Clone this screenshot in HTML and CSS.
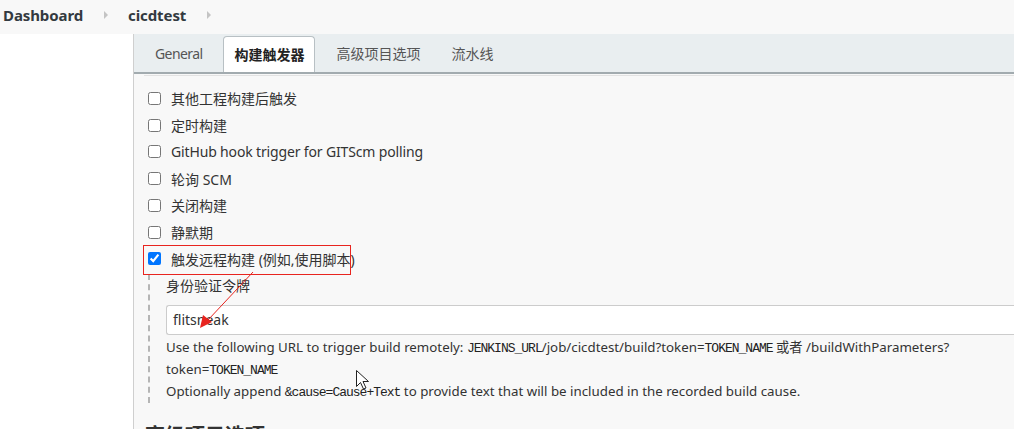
FILE: index.html
```html
<!DOCTYPE html>
<html lang="zh">
<head>
<meta charset="utf-8">
<link rel="stylesheet" href="styles.css">
</head>
<body>
<div class="crumbs">
  <a class="crumb">Dashboard</a><span class="sep"></span>
  <a class="crumb">cicdtest</a><span class="sep"></span>
</div>
<div class="main">
  <div class="side"></div>
  <div class="content">
    <div class="tabbar">
      <span class="tab latin">General</span>
      <span class="tab active">构建触发器</span>
      <span class="tab">高级项目选项</span>
      <span class="tab">流水线</span>
    </div>
    <div class="rule"></div>
    <div class="checks">
      <label class="row"><input type="checkbox"><span>其他工程构建后触发</span></label>
      <label class="row"><input type="checkbox"><span>定时构建</span></label>
      <label class="row"><input type="checkbox"><span class="latin">GitHub hook trigger for GITScm polling</span></label>
      <label class="row"><input type="checkbox"><span>轮询 SCM</span></label>
      <label class="row"><input type="checkbox"><span>关闭构建</span></label>
      <label class="row"><input type="checkbox"><span>静默期</span></label>
      <label class="row"><input type="checkbox" checked><span>触发远程构建 (例如,使用脚本)</span></label>
    </div>
    <div class="nested">
      <div class="field-label">身份验证令牌</div>
      <div class="input">flitsneak</div>
      <div class="help">
        <div>Use the following URL to trigger build remotely: <code>JENKINS_URL</code>/job/cicdtest/build?token=<code>TOKEN_NAME</code> 或者 /buildWithParameters?</div>
        <div>token=<code>TOKEN_NAME</code></div>
        <div>Optionally append <code>&amp;cause=Cause+Text</code> to provide text that will be included in the recorded build cause.</div>
      </div>
    </div>
    <h2 class="section">高级项目选项</h2>
  </div>
</div>
<svg class="annot" width="1014" height="429" viewBox="0 0 1014 429">
  <rect x="143.5" y="245.5" width="207" height="29" fill="none" stroke="#e8241f" stroke-width="1"/>
  <line x1="253" y1="272" x2="208" y2="320" stroke="#e8241f" stroke-width="1"/>
  <polygon points="200,328 203,315 212,322" fill="#e8241f"/>
  <path d="M356.5 370.5 L356.5 386.5 L360.5 382.5 L363.5 389 L366 388 L363 381.5 L368.5 381.5 Z" fill="#fff" stroke="#222" stroke-width="1" stroke-linejoin="round"/>
</svg>
</body>
</html>
```
FILE: styles.css
```css
html, body {
  margin: 0;
  padding: 0;
}
body {
  width: 1014px;
  height: 429px;
  overflow: hidden;
  background: #ffffff;
  font-family: "Noto Sans", "Noto Sans CJK SC", sans-serif;
  color: #333;
  position: relative;
}
.crumbs {
  height: 34px;
  background: #f8f8f8;
  display: flex;
  align-items: center;
  padding: 0 0 5px 3px;
  box-sizing: border-box;
}
.crumb {
  font-weight: 700;
  font-size: 15px;
  color: #333a40;
  letter-spacing: -0.1px;
}
.sep {
  width: 0;
  height: 0;
  border-top: 4px solid transparent;
  border-bottom: 4px solid transparent;
  border-left: 4px solid #c4c4c4;
  margin: 0 20px 0 21px;
}
.main {
  display: flex;
  height: 395px;
}
.side {
  width: 133px;
  flex: none;
  background: #fff;
}
.content {
  flex: 1;
  background: #f8f8f8;
  border-left: 1px solid #cfcfcf;
  overflow: hidden;
}
.tabbar {
  height: 40px;
  background: #e9eef0;
  border-bottom: 2px solid #a2abaf;
  display: flex;
  align-items: flex-end;
  box-sizing: border-box;
}
.tab {
  margin-left: 11px;
  padding: 0 10px;
  height: 36px;
  line-height: 36px;
  font-size: 14px;
  color: #555;
  box-sizing: border-box;
}
.latin {
  letter-spacing: -0.15px;
}
.tab.latin {
  letter-spacing: -0.6px;
}
.tab.active {
  background: #fff;
  border: 1px solid #b8c0c4;
  border-bottom: none;
  border-radius: 4px 4px 0 0;
  color: #222;
  font-weight: 700;
  line-height: 35px;
}
.rule {
  height: 1px;
  background: #e2e2e2;
  margin: 1px 0 0 10px;
}
.checks {
  padding-top: 9px;
}
.row {
  display: flex;
  align-items: center;
  height: 26.75px;
  padding-left: 14px;
  font-size: 14px;
  color: #333;
}
.row input {
  margin: 0 10px 0 0;
  width: 13px;
  height: 13px;
}
.nested {
  margin: 2px 0 0 14px;
  border-left: 2px dashed #b5b5b5;
  padding: 2px 0 0 16px;
}
.field-label {
  font-size: 14px;
  line-height: 20px;
  color: #333;
}
.input {
  margin-top: 9px;
  height: 30px;
  box-sizing: border-box;
  background: #fff;
  border: 1px solid #ccc;
  border-right: none;
  border-radius: 3px 0 0 3px;
  padding-left: 6px;
  font-size: 14px;
  line-height: 28px;
  color: #333;
}
.help {
  padding-top: 2px;
  font-size: 13.3px;
  line-height: 21px;
  color: #333;
}
.help code {
  font-family: "Liberation Mono", monospace;
  font-size: 13px;
  letter-spacing: -1px;
  color: #222;
}
.section {
  margin: 19px 0 0 11px;
  font-size: 20px;
  font-weight: 700;
  color: #333;
  line-height: 28px;
}
.annot {
  position: absolute;
  left: 0;
  top: 0;
  pointer-events: none;
}
```
